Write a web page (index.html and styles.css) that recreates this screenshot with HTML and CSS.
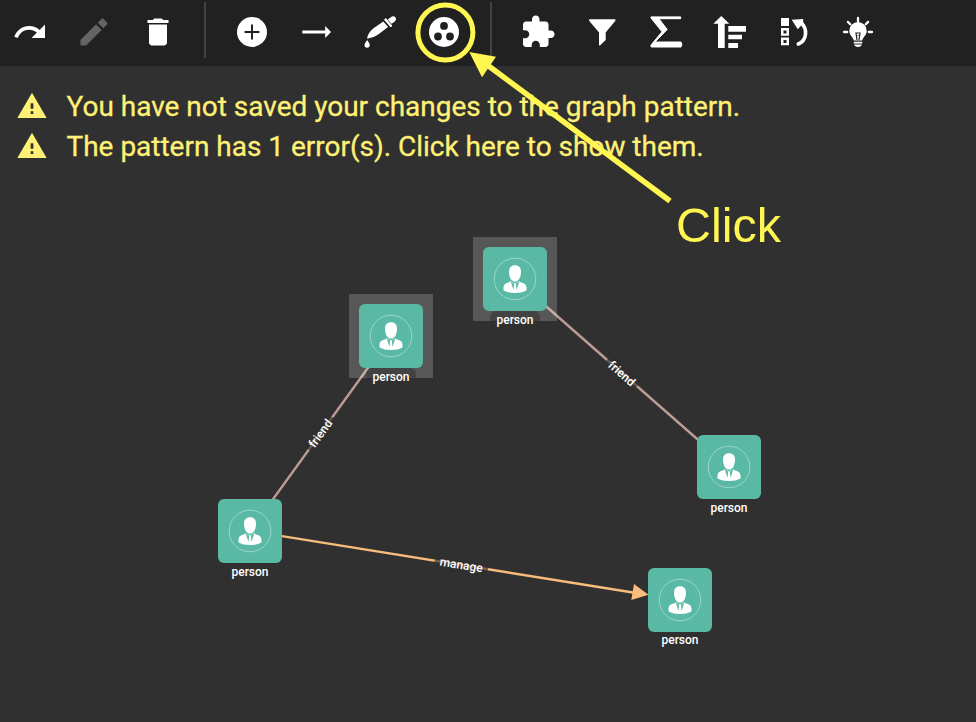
FILE: index.html
```html
<!DOCTYPE html>
<html lang="en">
<head>
<meta charset="utf-8">
<title>Graph pattern editor</title>
<link rel="stylesheet" href="styles.css">
</head>
<body>
<svg class="defs" aria-hidden="true">
  <symbol id="warning" viewBox="0 0 24 24"><path d="M1 21h22L12 2 1 21zm12-3h-2v-2h2v2zm0-4h-2v-4h2v4z"/></symbol>
  <symbol id="person" viewBox="-32 -32 64 64">
    <circle r="20.800" fill="none" stroke="#9bd4c8" stroke-width="1"/>
    <path fill="#fff" d="M0-13.800c3.800 0 6 2.300 6 6.500C6-2 3.600 2.600 0 2.600S-6-2-6-7.300c0-4.200 2.200-6.500 6-6.500z"/>
    <path fill="#fff" d="M-4.300 2.200C-6 4.200-11.500 3.500-11.500 8.800v2.700C-8.500 13.200-4.500 14 0 14s8.500-.8 11.500-2.500V8.800C11.500 3.500 6 4.200 4.300 2.200L0 4.500z"/>
    <path fill="#5ab9a5" d="M-4.300 2.600L-1.500 11-.9 4.500zM4.300 2.600L1.500 11 .9 4.500z"/>
  </symbol>
</svg>

<header class="toolbar">
  <svg class="icon" viewBox="0 0 24 24"><path d="M18.400 10.600C16.550 8.990 14.150 8 11.500 8c-4.650 0-8.580 3.030-9.960 7.220L3.900 16c1.050-3.190 4.050-5.500 7.600-5.500 1.950 0 3.730.72 5.120 1.880L13 16h9V7l-3.600 3.600z"/></svg>
  <svg class="icon icon--off" viewBox="0 0 24 24"><path d="M3 17.250V21h3.750L17.100 10.650 13.350 6.900 3 17.250zM20.710 7.040c.39-.39.39-1.020 0-1.410l-2.340-2.340c-.39-.39-1.020-.39-1.410 0l-2.500 2.500 3.750 3.750 2.500-2.500z"/></svg>
  <svg class="icon" viewBox="0 0 24 24"><path d="M6 19c0 1.100.9 2 2 2h8c1.100 0 2-.9 2-2V7H6v12zM19 4h-3.500l-1-1h-5l-1 1H5v2h14V4z"/></svg>
  <span class="divider"></span>
  <svg class="icon" viewBox="0 0 36 36"><circle cx="18" cy="18" r="15"/><path class="cut-line" d="M10.500 18h15M18 10.500v15"/></svg>
  <svg class="icon" viewBox="0 0 36 36"><path d="M4.300 16.600h22.900V12L33 18l-5.800 6v-4.500H4.300z"/></svg>
  <svg class="icon" viewBox="0 0 36 36"><path d="M5 24.700C5.500 21 8 17 11.500 14.300L21.300 7.500 26 13l-9.500 7.300C13 23 8.500 24 5 24.700z"/><path class="line" stroke-width="2.500" d="M23.600 5.600l5.200 6.200"/><path d="M25.800 5.500l2.700-2c2-1.800 3.900-1.500 4.900-.2 1.100 1.500.8 3.300-1.200 4.700L29.500 9.800z"/><path d="M5.200 26c1 1.700 2.500 3.300 2.500 5.100a2.600 2.600 0 0 1-5.200 0c0-1.800 1.700-3.400 2.700-5.100z"/></svg>
  <svg class="icon" viewBox="0 0 36 36"><circle cx="18" cy="18" r="15"/><g class="cut"><circle cx="18" cy="11.900" r="3.900"/><circle cx="12" cy="22.500" r="3.900"/><circle cx="24" cy="22.500" r="3.900"/></g></svg>
  <span class="divider"></span>
  <svg class="icon" viewBox="0 0 24 24"><path d="M20.500 11H19V7c0-1.100-.9-2-2-2h-4V3.500C13 2.120 11.880 1 10.500 1S8 2.120 8 3.500V5H4c-1.100 0-1.990.9-1.990 2v3.800H3.500c1.490 0 2.700 1.210 2.700 2.700s-1.210 2.700-2.700 2.700H2V20c0 1.100.9 2 2 2h3.800v-1.500c0-1.490 1.210-2.700 2.700-2.700s2.700 1.210 2.700 2.700V22H17c1.100 0 2-.9 2-2v-4h1.500c1.380 0 2.500-1.120 2.500-2.500S21.880 11 20.500 11z"/></svg>
  <svg class="icon" viewBox="0 0 36 36"><path d="M5.500 5.300h25.700q.8.800 0 1.800L21.700 18.500V26L16 31.500q-1 .4-1-.8V18.500L5.300 7.100q-.8-1 .2-1.800z"/></svg>
  <svg class="icon" viewBox="0 0 36 36"><path class="joined" d="M3 2.900h29.700v1.800H11l8.200 10.800L7 28h26q1.800 2.600 0 5H3.300q-1-1 0-2.300L14 17.800 3 4z"/></svg>
  <svg class="icon" viewBox="0 0 36 36"><path d="M9.300 2l8 7.700h-4.600V34H6V9.700H1.300zM16.300 12H34v5.700H16.300zM16.300 20.700H30v4.600H16.300zM16.300 29H26v5h-9.700z"/></svg>
  <svg class="icon" viewBox="0 0 36 36"><path fill-rule="evenodd" d="M5 4h8v8H5zM5 14h8v7.800H5zM7.500 16.400v3h3v-3zM5 23.600h8v7.600H5zM7.500 26v3h3v-3z"/><path d="M15.700 5.700l11.500-.8v4.300l-5.400 6z"/><path class="line" stroke-width="3.600" d="M22.300 30c8.500-3.300 9.800-14.800 2.700-21.300"/></svg>
  <svg class="icon" viewBox="0 0 36 36"><path d="M13.700 26.500c0-3-4.400-5-4.400-9.800a8.700 8.700 0 0 1 17.400 0c0 4.800-4.400 6.800-4.400 9.800zM13.800 27.700h8.400v1.700h-8.400zM14 30.500h8c-.5 1.500-2 2.500-4 2.500s-3.500-1-4-2.500z"/><path class="line" stroke-width="2.300" d="M18 4v3.200M7.900 7.900l2.300 2.300M28.100 7.900l-2.300 2.300M4 18h3.200M28.800 18H32"/><path class="cut-line thin" d="M17 26l-1-7h4l-1 7M17.500 21.500h1"/></svg>
</header>

<section class="messages">
  <div class="message"><svg class="message-icon"><use href="#warning"/></svg><span class="message-text">You have not saved your changes to the graph pattern.</span></div>
  <div class="message"><svg class="message-icon"><use href="#warning"/></svg><span class="message-text">The pattern has 1 error(s). Click here to show them.</span></div>
</section>

<main class="graph">
  <svg class="edges" viewBox="0 0 976 722">
    <path class="edge friend" d="M391 336L250 531M515 279L729 467"/>
    <path class="edge manage" d="M250 531L636 593"/>
    <path class="head" d="M648.500 594.700L634 584 631.300 600z"/>
    <g transform="translate(320.500 433.500) rotate(-54.100)"><rect class="edge-bg" x="-20" y="-9" width="40" height="18" rx="4"/><text y="4">friend</text></g>
    <g transform="translate(621.700 373.500) rotate(41.300)"><rect class="edge-bg" x="-20" y="-9" width="40" height="18" rx="4"/><text y="4">friend</text></g>
    <g transform="translate(461.300 565) rotate(9.100)"><rect class="edge-bg" x="-27" y="-9" width="54" height="18" rx="4"/><text y="4">manage</text></g>
  </svg>
  <div class="node selected n1"><svg class="tile"><use href="#person"/></svg><span class="label">person</span></div>
  <div class="node selected n2"><svg class="tile"><use href="#person"/></svg><span class="label">person</span></div>
  <div class="node n3"><svg class="tile"><use href="#person"/></svg><span class="label">person</span></div>
  <div class="node n4"><svg class="tile"><use href="#person"/></svg><span class="label">person</span></div>
  <div class="node n5"><svg class="tile"><use href="#person"/></svg><span class="label">person</span></div>
</main>

<svg class="callout" viewBox="0 0 976 722">
  <circle cx="445.400" cy="32.500" r="27.500"/>
  <path class="shaft" d="M486 64L670 201"/>
  <path class="tip" d="M469.300 52L496 56.700 482 77.300z"/>
  <text x="676" y="241.500">Click</text>
</svg>
</body>
</html>
```
FILE: styles.css
```css
* { box-sizing: border-box; }

body {
  position: relative;
  width: 976px;
  height: 722px;
  margin: 0;
  overflow: hidden;
  background: #303030;
  color: #fff;
  font-family: Roboto, sans-serif;
}

.defs { position: absolute; width: 0; height: 0; }

.toolbar {
  display: flex;
  gap: 28px;
  height: 66px;
  padding: 2px 12px 8px;
  align-items: center;
  background: #212121;
}

.icon { flex: none; width: 36px; height: 36px; margin-top: 4px; fill: #fff; }
.icon--off { fill: #646464; }
.icon .cut { fill: #212121; }
.icon .cut-line { fill: none; stroke: #212121; stroke-width: 2; }
.icon .thin { stroke-width: 1.2; }
.icon .line { fill: none; stroke: #fff; stroke-linecap: round; }
.icon .joined { stroke: #fff; stroke-width: 1; stroke-linejoin: round; }

.divider { flex: none; width: 2px; height: 56px; background: #424242; }

.messages { padding: 20px 16px; }
.message {
  display: flex;
  align-items: center;
  gap: 18.5px;
  height: 40px;
  color: #fff176;
  font-size: 28px;
  line-height: 40px;
  white-space: nowrap;
}
.message-icon { width: 32px; height: 32px; fill: #fff176; }
.message-text { padding-top: 2px; letter-spacing: -.01px; -webkit-text-stroke: .3px #fff176; }

.graph { position: absolute; inset: 0; }
.edges { position: absolute; inset: 0; width: 976px; height: 722px; }
.edge { fill: none; stroke-width: 2.4; }
.edge.friend { stroke: #bc9c94; }
.edge.manage { stroke: #f8bc7c; }
.head { fill: #f8bc7c; }
.edge-bg { fill: #303030; fill-opacity: .65; }
.edges text { fill: #fff; font-size: 12px; font-weight: 500; text-anchor: middle; }

.node {
  position: absolute;
  display: flex;
  flex-direction: column;
  align-items: center;
  width: 84px;
  height: 84px;
  padding-top: 10px;
}
.selected { background: rgba(255, 255, 255, .19); }
.tile { flex: none; width: 64px; height: 64px; border-radius: 6px; background: #5ab9a5; }
.label {
  flex: none;
  height: 20px;
  padding: 0 6px;
  border-radius: 6px;
  background: rgba(48, 48, 48, .5);
  font-size: 12px;
  font-weight: 500;
  line-height: 19px;
}
.n1 { left: 349px; top: 294px; }
.n2 { left: 473px; top: 237px; }
.n3 { left: 687px; top: 425px; }
.n4 { left: 208px; top: 489px; }
.n5 { left: 638px; top: 558px; }
.n5 .label { line-height: 17px; }

.callout { position: absolute; inset: 0; width: 976px; height: 722px; }
.callout circle { fill: none; stroke: #fff651; stroke-width: 5; }
.shaft { stroke: #fff651; stroke-width: 5.5; }
.tip { fill: #fff651; }
.callout text { fill: #fff651; font-family: "Liberation Sans", sans-serif; font-size: 48.5px; }
```
